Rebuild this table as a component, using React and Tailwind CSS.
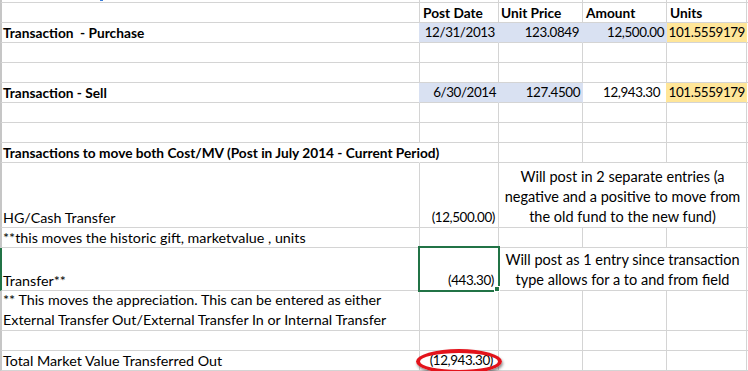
import React from "react";

const G = "border-[#d4d4d4]";
const FONT = "font-['Lato',sans-serif] text-black";
const REG = "text-[14.3px] leading-[17px]";
const NUM = "text-[13.4px] leading-[17px] tracking-[-0.4px]";
const BOLD = "text-[13.7px] leading-[17px] font-bold";

function A({ children, className = "", left = "border-l-[#c6c6c6]", right = "border-r-[#d4d4d4]" }) {
  return (
    <div className={`w-[420px] shrink-0 border-l-2 border-r border-b border-b-[#d4d4d4] ${left} ${right} flex items-end pl-[1px] ${className}`}>
      {children}
    </div>
  );
}

function C({ w, children, className = "", right = "border-r-[#d4d4d4]", bg = "" }) {
  return (
    <div className={`${w} shrink-0 border-r border-b border-b-[#d4d4d4] ${right} ${bg} flex items-end ${className}`}>
      {children}
    </div>
  );
}

function Rest() {
  return <div className={`flex-1 border-b ${G}`} />;
}

function Row({ h, children }) {
  return <div className={`flex ${h}`}>{children}</div>;
}

function EmptyRow({ h = "h-5" }) {
  return (
    <Row h={h}>
      <A />
      <C w="w-[79px]" />
      <C w="w-[84px]" />
      <C w="w-[84px]" />
      <C w="w-[80px]" />
      <Rest />
    </Row>
  );
}

export default function App() {
  return (
    <div className={`h-[371px] w-[748px] overflow-hidden bg-white ${FONT}`}>
      {/* partial top row */}
      <Row h="h-[3px]">
        <A className="relative">
          <div className="absolute left-[98px] top-0 h-px w-[3px] bg-[#3b7dd8]" />
        </A>
        <C w="w-[79px]" />
        <C w="w-[84px]" />
        <C w="w-[84px]" />
        <C w="w-[80px]" />
        <Rest />
      </Row>

      {/* header */}
      <Row h="h-5">
        <A />
        <C w="w-[79px]" className={`pl-[3px] ${BOLD}`}><span className="pb-[1px]">Post Date</span></C>
        <C w="w-[84px]" className={`pl-[2px] ${BOLD}`}><span className="pb-[1px]">Unit Price</span></C>
        <C w="w-[84px]" className={`pl-[3px] ${BOLD}`}><span className="pb-[1px]">Amount</span></C>
        <C w="w-[80px]" className={`pl-[3px] ${BOLD}`}><span className="pb-[1px]">Units</span></C>
        <Rest />
      </Row>

      {/* purchase */}
      <Row h="h-5">
        <A right="border-r-[#d9e1f2]" className={BOLD}><span className="pb-[1px] whitespace-pre">Transaction  - Purchase</span></A>
        <C w="w-[79px]" bg="bg-[#d9e1f2]" right="border-r-[#d9e1f2]" className={`justify-end pr-[3px] ${NUM}`}><span className="pb-[1px]">12/31/2013</span></C>
        <C w="w-[84px]" bg="bg-[#d9e1f2]" right="border-r-[#d9e1f2]" className={`justify-end pr-[3px] ${NUM}`}><span className="pb-[1px]">123.0849</span></C>
        <C w="w-[84px]" bg="bg-[#d9e1f2]" right="border-r-[#d9e1f2]" className={`justify-end pr-[2px] ${NUM}`}><span className="pb-[1px]">12,500.00</span></C>
        <C w="w-[80px]" bg="bg-[#ffe699]" right="border-r-[#ffe699]" className={`justify-end pr-[1px] ${NUM}`}><span className="pb-[1px]">101.5559179</span></C>
        <Rest />
      </Row>

      <EmptyRow />
      <EmptyRow />

      {/* sell */}
      <Row h="h-5">
        <A right="border-r-[#d9e1f2]" className={BOLD}><span className="pb-[1px]">Transaction - Sell</span></A>
        <C w="w-[79px]" bg="bg-[#d9e1f2]" right="border-r-[#d9e1f2]" className={`justify-end pr-[2px] ${NUM}`}><span className="pb-[1px]">6/30/2014</span></C>
        <C w="w-[84px]" bg="bg-[#d9e1f2]" right="border-r-[#d9e1f2]" className={`justify-end pr-[2px] ${NUM}`}><span className="pb-[1px]">127.4500</span></C>
        <C w="w-[84px]" right="border-r-[#ffe699]" className={`justify-end pr-[6px] ${NUM}`}><span className="pb-[1px]">12,943.30</span></C>
        <C w="w-[80px]" bg="bg-[#ffe699]" right="border-r-[#ffe699]" className={`justify-end pr-[1px] ${NUM}`}><span className="pb-[1px]">101.5559179</span></C>
        <Rest />
      </Row>

      <EmptyRow />
      <EmptyRow />

      {/* transactions to move */}
      <Row h="h-5">
        <A right="border-r-transparent" className={`${BOLD} overflow-visible`}>
          <span className="pb-[1px] whitespace-nowrap">Transactions to move both Cost/MV (Post in July 2014 - Current Period)</span>
        </A>
        <C w="w-[79px]" />
        <C w="w-[84px]" />
        <C w="w-[84px]" />
        <C w="w-[80px]" />
        <Rest />
      </Row>

      {/* HG/Cash Transfer */}
      <Row h="h-[65px]">
        <A className={REG}><span className="pb-[1px]">HG/Cash Transfer</span></A>
        <C w="w-[79px]" className={`justify-end pr-[3px] ${NUM}`}><span className="pb-[1px]">(12,500.00)</span></C>
        <C w="w-[248px]" className="justify-center text-center text-[14.5px] leading-[20px]">
          <span>Will post in 2 separate entries (a<br />negative and a positive to move from<br />the old fund to the new fund)</span>
        </C>
        <Rest />
      </Row>

      {/* this moves */}
      <Row h="h-5">
        <A className={REG}><span className="pb-[1px]">**this moves the historic gift, marketvalue , units</span></A>
        <C w="w-[79px]" />
        <C w="w-[84px]" />
        <C w="w-[84px]" />
        <C w="w-[80px]" />
        <Rest />
      </Row>

      {/* Transfer** */}
      <Row h="h-[43px]">
        <A left="border-l-[#217346]" className={REG}><span className="pb-[1px]">Transfer**</span></A>
        <C w="w-[79px]" className={`relative justify-end pr-[4px] ${NUM}`}>
          <span className="pb-[1px]">(443.30)</span>
          <div className="pointer-events-none absolute -left-[2px] -top-[2px] h-[46px] w-[82px] border-2 border-[#217346]" />
          <div className="pointer-events-none absolute -bottom-[2px] -right-[2px] h-[6px] w-[6px] border border-white bg-[#217346]" />
        </C>
        <C w="w-[248px]" className="justify-center text-center text-[14.5px] leading-[20px]">
          <span>Will post as 1 entry since transaction<br />type allows for a to and from field</span>
        </C>
        <Rest />
      </Row>

      {/* ** This moves the appreciation */}
      <Row h="h-[40px]">
        <A className="text-[14.3px] leading-[20px]">
          <span>** This moves the appreciation. This can be entered as either<br />External Transfer Out/External Transfer In or Internal Transfer</span>
        </A>
        <C w="w-[79px]" />
        <C w="w-[84px]" />
        <C w="w-[84px]" />
        <C w="w-[80px]" />
        <Rest />
      </Row>

      <EmptyRow />

      {/* total */}
      <Row h="h-5">
        <A className={REG}><span className="pb-[1px]">Total Market Value Transferred Out</span></A>
        <C w="w-[79px]" className={`relative justify-end pr-[5px] ${NUM}`}>
          <span className="pb-[1px]">(12,943.30)</span>
          <div className="pointer-events-none absolute -left-[4px] -top-[2px] h-[25px] w-[86px] rounded-[50%] border-[4px] border-[#e3131b] shadow-[1px_2px_3px_rgba(0,0,0,0.45)]" />
        </C>
        <C w="w-[84px]" />
        <C w="w-[84px]" />
        <C w="w-[80px]" />
        <Rest />
      </Row>
    </div>
  );
}
